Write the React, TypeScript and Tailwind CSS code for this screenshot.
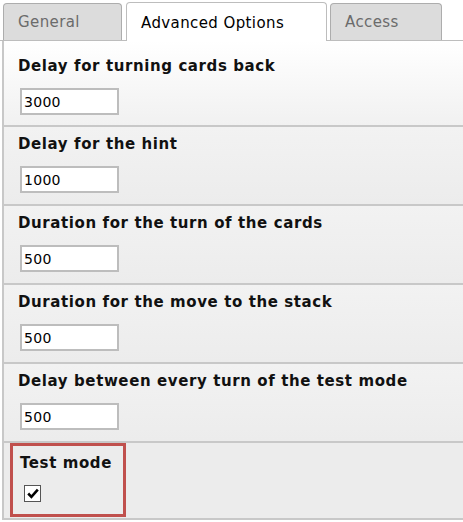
import { useState } from "react"

const rows = [
  { label: "Delay for turning cards back", value: "3000" },
  { label: "Delay for the hint", value: "1000" },
  { label: "Duration for the turn of the cards", value: "500" },
  { label: "Duration for the move to the stack", value: "500" },
  { label: "Delay between every turn of the test mode", value: "500" },
]

export default function App() {
  const [values, setValues] = useState<string[]>(rows.map((r) => r.value))
  const [testMode, setTestMode] = useState<boolean>(true)
  const fontStyle = `font-['Verdana','DejaVu_Sans',sans-serif]`
  const tabStyle = `h-[37px] rounded-t-[4px] border border-b-0 border-[#adadad] bg-[#dcdcdc] text-[#6b6b6b] text-[15px] tracking-[0.4px] pl-[14px] pt-[8px] leading-[20px]`
  const labelStyle = `font-bold text-[15px] tracking-[0.6px] leading-[18px] text-[#111]`
  const inputStyle = `w-[99px] h-[27px] ml-[2px] border-2 border-[#bdbdbd] bg-white px-[2px] text-[14px] tracking-[0.3px] text-black outline-none`

  return (
    <div className={`w-[463px] h-[522px] bg-white overflow-hidden ${fontStyle}`}>
      <div className="flex items-end h-[41px] border-b border-[#bdbdbd]">
        <div className={`${tabStyle} ml-[3px] w-[119px]`}>General</div>
        <div className="h-[39px] w-[201px] ml-[4px] -mb-px rounded-t-[4px] border border-b-0 border-[#bdbdbd] bg-white text-black text-[15px] tracking-[0.4px] pl-[14px] pt-[10px] leading-[20px]">
          Advanced Options
        </div>
        <div className={`${tabStyle} ml-[3px] w-[112px]`}>Access</div>
      </div>

      <div className="ml-[2px] border-l-2 border-[#c8c8c8]">
        {rows.map((row, i) => (
          <div
            key={row.label}
            className={
              i === 0
                ? "h-[84px] pt-[16px] pl-[14px] bg-gradient-to-b from-white to-[#f1f1f1]"
                : "h-[79px] pt-[8px] pl-[14px] border-t-2 border-[#c8c8c8] bg-gradient-to-b from-[#f2f2f2] to-[#ececec]"
            }
          >
            <div className={labelStyle}>{row.label}</div>
            <div className="mt-[13px]">
              <input
                type="text"
                value={values[i]}
                onChange={(e) => setValues(values.map((v, j) => (j === i ? e.target.value : v)))}
                className={`${inputStyle} ${fontStyle}`}
              />
            </div>
          </div>
        ))}

        <div className="h-[79px] pl-[6px] border-t-2 border-b-2 border-[#c8c8c8] bg-[#ececec]">
          <div className="w-[116px] h-[74px] border-[3px] border-[#c0504d] pt-[8px] pl-[7px]">
            <div className={labelStyle}>Test mode</div>
            <div
              className="mt-[13px] ml-[4px] w-[17px] h-[17px] border border-[#555] bg-white flex items-center justify-center cursor-pointer"
              onClick={() => setTestMode(!testMode)}
            >
              {testMode && (
                <svg width="12" height="11" viewBox="0 0 12 11">
                  <path d="M1.2 5.5 L4.4 8.8 L10.8 1.6" fill="none" stroke="#000" strokeWidth="2.6" />
                </svg>
              )}
            </div>
          </div>
        </div>
      </div>
    </div>
  )
}
